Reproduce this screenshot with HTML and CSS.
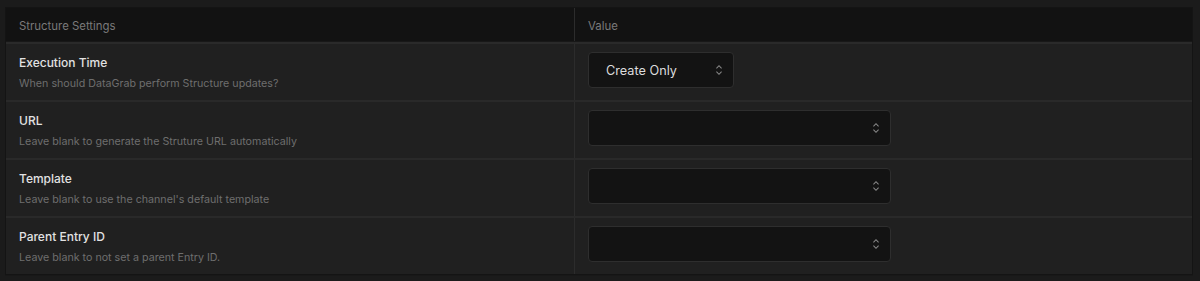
FILE: index.html
```html
<!DOCTYPE html>
<html lang="en">
<head>
  <meta charset="UTF-8">
  <title>Structure Settings</title>
  <link rel="stylesheet" href="styles.css">
</head>
<body>
  <div class="settings">
    <div class="row head">
      <div class="cell">Structure Settings</div>
      <div class="cell value">Value</div>
    </div>

    <div class="row">
      <div class="cell">
        <div class="label">Execution Time</div>
        <div class="desc">When should DataGrab perform Structure updates?</div>
      </div>
      <div class="cell value">
        <div class="select small">
          <span>Create Only</span>
          <svg class="caret" viewBox="0 0 8 14"><path d="M1 5 L4 2 L7 5 M1 9 L4 12 L7 9"/></svg>
        </div>
      </div>
    </div>

    <div class="row">
      <div class="cell">
        <div class="label">URL</div>
        <div class="desc">Leave blank to generate the Struture URL automatically</div>
      </div>
      <div class="cell value">
        <div class="select">
          <span></span>
          <svg class="caret" viewBox="0 0 8 14"><path d="M1 5 L4 2 L7 5 M1 9 L4 12 L7 9"/></svg>
        </div>
      </div>
    </div>

    <div class="row">
      <div class="cell">
        <div class="label">Template</div>
        <div class="desc">Leave blank to use the channel's default template</div>
      </div>
      <div class="cell value">
        <div class="select">
          <span></span>
          <svg class="caret" viewBox="0 0 8 14"><path d="M1 5 L4 2 L7 5 M1 9 L4 12 L7 9"/></svg>
        </div>
      </div>
    </div>

    <div class="row">
      <div class="cell">
        <div class="label">Parent Entry ID</div>
        <div class="desc">Leave blank to not set a parent Entry ID.</div>
      </div>
      <div class="cell value">
        <div class="select">
          <span></span>
          <svg class="caret" viewBox="0 0 8 14"><path d="M1 5 L4 2 L7 5 M1 9 L4 12 L7 9"/></svg>
        </div>
      </div>
    </div>
  </div>
</body>
</html>
```

FILE: styles.css
```css
* {
  box-sizing: border-box;
}

body {
  margin: 0;
  padding: 7px 7px 6px 5px;
  background: #1b1b1b;
  font-family: Inter, 'Open Sans', sans-serif;
}

.settings {
  border: 1px solid #141414;
  background: #202020;
  box-shadow: 0 1px 0 #181818;
}

.row {
  display: grid;
  grid-template-columns: 568px 1fr;
  height: 58px;
  border-top: 2px solid #292929;
}

.row.head {
  height: 34px;
  border-top: none;
  background: #121212;
  border-bottom: 1px solid #181818;
}

.row.head + .row {
  border-top: 2px solid #2a2a2a;
}

.cell {
  padding: 11px 13px 0;
}

.head .cell {
  padding-top: 11px;
  font-size: 11.4px;
  color: #7a7a7a;
}

.cell.value {
  border-left: 1px solid #2c2c2c;
  padding: 8px 13px 0;
}

.head .cell.value {
  padding-top: 11px;
}

.label {
  font-size: 12px;
  font-weight: 500;
  color: #e2e2e2;
  line-height: 15px;
}

.desc {
  margin-top: 7px;
  font-size: 10.7px;
  color: #6e6e6e;
  line-height: 14px;
}

.select {
  display: flex;
  align-items: center;
  justify-content: space-between;
  width: 303px;
  height: 36px;
  padding: 0 10px 0 17px;
  background: #131313;
  border: 1px solid #2e2e2e;
  border-radius: 4px;
  color: #dcdcdc;
  font-size: 12.7px;
}

.select.small {
  width: 146px;
}

.caret {
  width: 8px;
  height: 12px;
  fill: none;
  stroke: #8a8a8a;
  stroke-width: 1.2;
}
```
